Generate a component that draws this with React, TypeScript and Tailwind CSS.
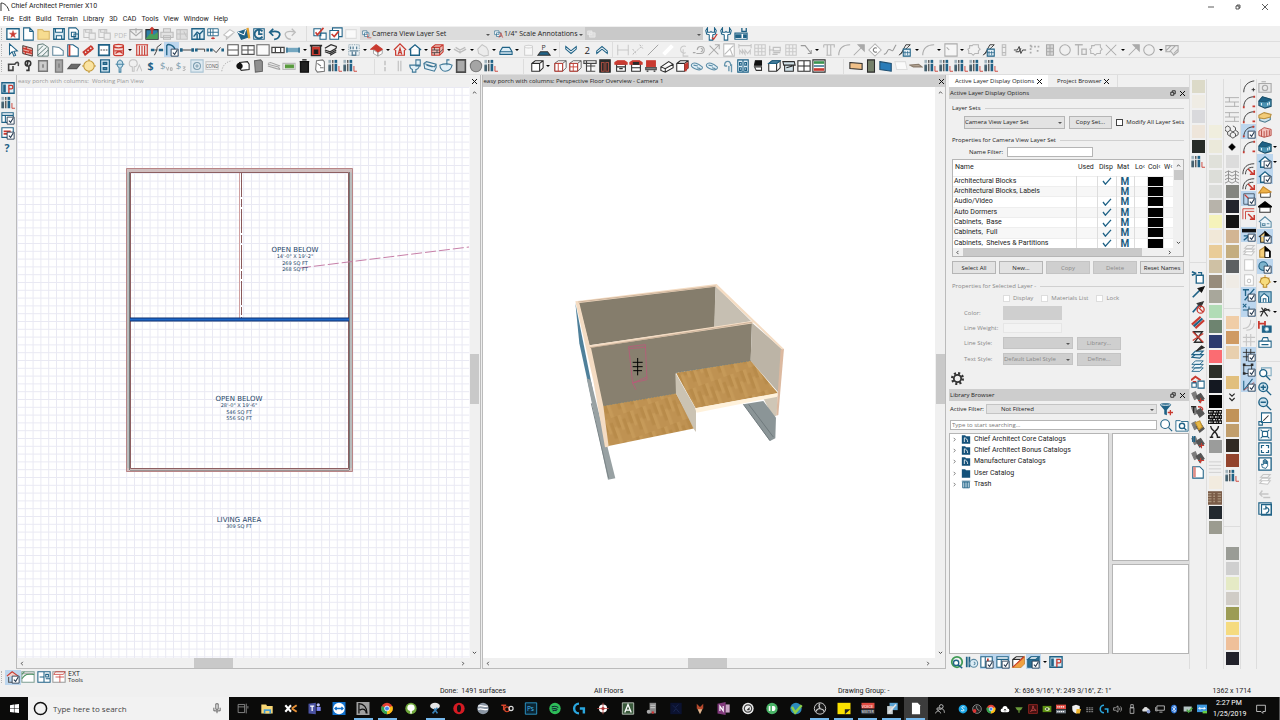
import { ReactNode } from "react";

const B = "#1f6286";
const R = "#c93a30";
const G = "#c2c2c2";
const K = "#2b2b2b";

const L = ({ d, c = B, f = "none", w = 1.2 }: { d: string; c?: string; f?: string; w?: number }) => (
  <path d={d} stroke={c} fill={f} strokeWidth={w} />
);

const housePath = "M1 8 8 2l7 6M3 7v7h10V7";
const cubePath = "M2 5 6 2h9v8l-4 4H2zM2 5h9v9M11 5l4-3";
const checkBox = (
  <>
    <L d="M7 7h8v8H7z" f="#fff" c="#24384f" w={1} />
    <L d="m9 11 2 2 3-5" c="#24384f" w={1.2} />
  </>
);
const catalogCards = (
  <>
    <L d="m1 4 4-2 3 7-4 2z" f="#7d7d7d" c="#7d7d7d" />
    <L d="m6 7 5-3 4 6-5 4z" f="#555" c="#555" />
  </>
);

// every toolbar glyph, drawn on a 16 unit square
const glyphs: Record<string, ReactNode> = {
  star: <><L d="M1 2h14v12H1z" f="#fff" w={1.5} /><L d="m8 4 1 3h3L9.5 9l1 3L8 10.2 5.500 12l1-3L4 7h3z" c={R} f={R} w={0.5} /></>,
  doc: <L d="M3 1h7l4 4v10H3zM10 1v4h4" f="#fff" />,
  folder: <L d="M1 3h5l2 2h6v9H1z" c="#d9b765" f="#f7dc90" />,
  save: <><L d="M2 2h12v12H2z" f="#dcecf5" w={1.5} /><L d="M4 2h8v4H4zM5 10h6v4H5z" f="#fff" /></>,
  saveas: <><L d="M2 1h8l3 3v10H2z" f="#fff" /><L d="M5 6h5v5H5zM8 8h5v5H8z" /></>,
  gsave: <><L d="M1 3h9v9H1zM3 3v3h5V3" c={G} /><L d="M7 7h7v7H7z" c={G} f="#eee" /></>,
  pdf: <text x="0" y="12" fontSize="8" fill="#bdbdbd">PDF</text>,
  gmail: <L d="M1 3h14v11H1zM1 4l7 6 7-6M8 1v6" c="#aaa" />,
  picture: <><L d="M1 3h14v11H1z" f="#2f7fa8" c={K} /><L d="m2 13 5-6 3 3 4-3v6z" f="#49a05a" c="#49a05a" /><L d="M8 8V1M6 3l2-2 2 2" c={R} w={2} /></>,
  printer: <L d="M4 6V2h8v4M1 6h14v6H1zM4 10h8v4H4z" c="#bbb" f="#e2e2e2" />,
  gcube: <L d="M2 3h12v11H2zM6 3v11M2 8h12M10 5l3 6" c={G} f="#dedede" />,
  chart: <><L d="M1 2h14v12H1z" f="#e0eef5" w={1.5} /><L d="m3 11 4-5 3 2 4-4M7 8v6M10 8v6" w={1.6} /></>,
  screen: <><L d="M2 2h12v8H2zM5 2v8M8 2v8M2 6h12" f="#fff" w={1} /><L d="M8 11v3M6 13h4" c={R} /></>,
  eraser: <L d="m2 9 7-6 5 3-7 6zM5 11v3l7-6" c={G} f="#fff" />,
  mail: <><L d="m1 6 9-3 4 8-9 3z" f={B} /><L d="m1 6 7 3 2-6" c="#fff" /><L d="m12 1 2 12" c="#e0a030" w={2.6} /></>,
  swirl: <><L d="M2 2h12v12H2z" /><L d="M12 5a5 5 0 1 0 0 6M8 4v4h4" w={2} /></>,
  undo: <L d="M6 2 2 6l4 4M2 6c9-3 13 1 11 4-1 3-4 4-6 4" w={2} />,
  redo: <L d="m10 2 4 4-4 4M14 6C5 3 1 7 3 10c1 3 4 4 6 4" c="#bcbcbc" w={1.5} />,
  checks: <><L d="M1 2h8v8H1zM8 7h7v7H8z" f="#fff" /><L d="m3 6 2 3 7-8" c={R} w={1.8} /></>,
  checkframe: <><L d="M1 4h10v10H1zM4 4V1h11v10h-4" f="#fff" /><L d="m3 8 3 3 5-6" c={R} w={1.8} /></>,
  blank: <L d="M2 3h12v10H2z" c="#ddd" f="#fafafa" />,
  wrench: <L d="M4 1 2 4l1 4 3 1v6h4V9l3-1 1-4-2-3v5H9l-1-1-1 1H4z" f="#fff" />,
  wrenchc: <><L d="M4 1 2 4l1 4 3 1v6h4V9l3-1 1-4-2-3v5H9l-1-1-1 1H4z" f="#fff" /><L d="m9 12 2 2 4-6" c={R} w={1.5} /></>,
  cabtool: <><L d="M1 7h14v7H1z" f="#fff" /><L d="M2 9h6v3H2zM11 9h3v3h-3z" f={B} /><L d="M9 1v4h5V1" w={1.5} /></>,
  cursor: <L d="m4 1 9 8-4 .5L11 14l-2 1-2-5-3 3z" f="#fff" />,
  brick: <><L d="m2 3 11 3v9L2 12z" c={K} f="#e9b3ac" w={1} /><L d="m2 6 11 3M2 9l11 3M6 4v3M10 8v3M5 10v3" c={R} w={1.5} /></>,
  hatch: <L d="m2 2 6-1 6 4v10H2zM2 9l6-6M2 14 12 5M7 15l7-7" c="#4b6a67" f="#eef3f3" w={1} />,
  shape: <L d="M2 4v10h12V9L9 5z" f="#fff" c="#5e859a" />,
  door: <><L d="M2 2v13h12V6L8 2z" f="#fff" /><L d="M4 2v13" c={R} w={2} /></>,
  rail: <L d="M2 11 12 3M4 14 14 6M3 10l2 4M6 8l2 4M9 6l2 4M12 4l2 3" c={R} w={2} />,
  dashsq: <><L d="M2 2h12v12H2z" w={2} f="#fff" /><path d="M4 8h9" stroke={K} strokeDasharray="2 1" /></>,
  barrel: <L d="M2 3c0-2 11-2 11 0v10c0 2-11 2-11 0zM2 4c2 2 9 2 11 0M3 9h9M4 12c3-3 6-3 8 0" c={R} f="#f7dcd8" w={1.5} />,
  fence: <L d="M1 2h14M1 14h14M2 2v12M5 3v11M8 3v11M11 3v11M14 2v12" c={R} w={1.3} />,
  zigzag: <><L d="M5 8h3V5l5-4M8 8l-3 6" c={K} w={1} /><L d="M1 8h4M10 8h5" w={2.6} /></>,
  curve: <><L d="M2 14V3c1-2 9-2 10 7" w={1.5} />{checkBox}</>,
  wall: <><L d="M2 8h12" c={K} w={1} /><L d="M0 8h3M13 8h3" w={4} /></>,
  wall2: <><L d="M2 7h9v3" c={K} w={1} /><L d="M0 8h3M13 8h3" w={3.5} /></>,
  wall3: <><L d="m3 7 4 4 5-6" c={K} w={1} /><L d="M0 8h3M13 8h3" w={3.5} /></>,
  winh: <L d="M2 2h12v12H2zM2 8h12" c="#555" f="#fff" />,
  win4: <L d="M1 3h14v10H1zM8 3v10M1 8h14" c="#555" f="#fff" />,
  square: <L d="M1 2h14v12H1z" c="#666" f="#fafafa" />,
  win3: <L d="M1 5h14v6H1zM5 5v6M11 5v6" c="#444" f="#fff" w={1.4} />,
  bwall: <><L d="M1 8h14" w={5} c="#74a7c0" /><L d="M1 5v6M15 5v6" w={1.5} /></>,
  fire: <><L d="M1 3h14M3 3v11h10V3" c={K} w={2} /><L d="M4 5h8v8H4z" c={R} f={R} /><L d="M6 8h4v4H6z" f="#1c1c1c" c="#1c1c1c" /></>,
  stairs: <L d="m1 6 7-4 6 2v2M1 10l6 2 7-4M1 8l6 2 7-4M7 14l7-4" c={K} w={1.4} />,
  building: <><path d="M2 2h12v12H2z" stroke="#6f8c9b" fill="#eef4f7" strokeDasharray="1 1" /><L d="M4 4v3M7 4v3M11 4v3M3 9h10M6 10v4h4v-4" w={1.5} c="#5d8298" /></>,
  redhouse: <><L d="m4 8 5 3v4l-5-3zM9 11l5-3v4l-5 3z" c="#888" f="#fff" w={0.8} /><L d="m1 7 6-5 7 5-5 3-4-3z" c={R} f={R} /></>,
  ahouse: <L d="m1 8 7-7 7 7M3 8v6h10V8M6 13l2-7 2 7M6.500 11h3" c={R} w={1.4} />,
  house: <L d={housePath} f="#fff" w={1.5} />,
  bcube: <><L d={cubePath} c={R} f="#e8b9b2" /><L d="M2 8h9M2 11h9l4-4M5 5v3M8 8v3M5 11v3" c={K} w={0.8} /></>,
  gslab: <L d="m1 7 7 4 7-4M8 12V9M3 5l5 3 6-3" c="#bcbcbc" w={1.4} />,
  ghouse: <L d="m2 7 5-5 5 3 2 4v5l-5 1-6-3z" c="#c5c5c5" f="#ececec" />,
  trap: <L d="M1 10 4 5h8l3 5v3H1zM1 10h14" f="#dcecf5" />,
  cyl: <L d="M3 4c0-2 9-2 9 0v10H3zM3 5c2 1 7 1 9 0" c="#d0d0d0" f="#f8f8f8" />,
  pslab: <><L d="m1 14 3-4h8l3 4z" f={B} c="#333" /><text x="5" y="8" fontSize="8" fill="#333">P</text></>,
  down: <L d="m2 4 6 5 6-5v3l-6 5-6-5z" f="#fff" />,
  up: <L d="m2 12 6-5 6 5V9L8 4 2 9z" f="#fff" />,
  two: <text x="5" y="12" fontSize="11" fill="#222">2</text>,
  dimh: <L d="M2 2v12M14 2v12M2 8h12" c={G} w={1} />,
  dots: <path d="M2 13 13 3M2 7l4 6M10 2l4 5" stroke="#aaa" strokeDasharray="2 1.500" />,
  line: <L d="M2 14 14 2" c="#9a9a9a" w={1} />,
  bar: <L d="M3 13 13 3" c="#fff" w={4.5} />,
  cl: <L d="M10 4a4 4 0 1 0 0 7M7 7v8h6" c="#c8c8c8" />,
  tape: <L d="M1 11h3M6 8a4 4 0 1 1 4 4H5M10 6a2 2 0 1 1 0 4" c="#a8a8a8" />,
  diaga: <L d="M2 14 14 2M3 3l10 10M9 2h5v5" c="#aaa" />,
  boxa: <L d="M2 1h12v14H2zM3 13 13 3M9 6l3 8" c="#bbb" f="#fff" />,
  dim1: <L d="M1 3h14M1 1v5M15 1v5M2 13V8l3 4V8l3 5V8l3 4 3-4v5" c="#c5c5c5" />,
  dim2: <L d="M2 2h12v12H2zM2 6h12M2 10h12M6 2v12M10 2v12" c="#c9c9c9" />,
  dim3: <L d="M2 3v11M6 5h8v4H6zM6 11h8M5 13h6M1 8h6" c="#c0c0c0" w={1.3} />,
  lead: <L d="M2 3h5l7 9M10 12h4V8" c="#999" />,
  text: <L d="M2 2h12v3M2 5V2M6 2v12M10 2v12M5 14h6" c="#b5b5b5" />,
  arc: <L d="M2 14C2 6 7 2 15 2" c="#aaa" />,
  arrow: <><L d="M2 14 12 4" c="#aaa" /><L d="M7 2h7v7z" f="#aaa" c="#aaa" /></>,
  cdia: <><L d="m8 1 7 7-7 7-7-7z" c="#b5b5b5" f="#fff" /><L d="M10 6a2.500 2.500 0 1 0 0 4" c="#777" /></>,
  spline: <L d="M1 13c5 0 3-8 8-5 3 3 3-2 6-6" c="#999" />,
  fn: <><L d="m1 14 10-9 3-3H9L3 13" c={K} w={1} /><L d="M6 7h8v8H6z" f="#e8f2f8" /><L d="M8 9v5M11 9v5M6 11h8" w={0.8} /></>,
  gbox: <L d="M1 1h14v14H1zM3 5l3 3" c="#aaa" f="#f6f6f6" />,
  cloud: <L d="M3 3h3l1-1h6v3l2 2-2 2v3H9l-2 2-2-2H2V9L1 7l2-1z" c="#b5b5b5" f="#f2f2f2" />,
  vbar: <L d="M6 2h4v12H6zM6 5h4M6 11h4" c="#bbb" />,
  brk: <L d="M1 8h4l2-4 2 8 2-4h4M3 10h4l2-4" c={K} w={1} />,
  pts: <path d="M3 2v12M3 4h10M10 9h4" stroke="#aaa" strokeWidth="2" strokeDasharray="2 2" />,
  gcab: <L d="M4 2h8v12H4zM4 6h8M4 10h8M8 2v12" c="#aaa" f="#d6d6d6" />,
  circle: <L d="M8 2a6 6 0 1 1 0 12A6 6 0 1 1 8 2z" c="#aaa" />,
  textbox: <L d="M1 2h9M5 2v12M9 7h5v6H9z" c="#b5b5b5" w={1.5} />,
  cross: <L d="M2 2l12 12M14 2 2 14" c="#aaa" />,
  gpatch: <L d="M1 3h14v7l-5 4-3-4H1zM1 9l6-6M5 10l7-7M10 12l5-5" c="#aaa" f="#ececec" />,
  faucet: <L d="M2 6h8c3-4 5-2 4 2M3 5v8h5V8" c="#444" w={1.8} />,
  key: <L d="M8 2c4 0 4 5 1 6v6M7 8C4 7 4 2 8 2zM9 13H6" c="#333" w={1.8} />,
  panel: <L d="M3 2h10v12H3zM8 6v4" c="#777" f="#ccc" w={1.6} />,
  switch: <L d="M4 1h8v14H4zM8 5v5" c="#7a7a7a" f="#a8a8a8" w={1.5} />,
  slab: <L d="m1 11 4-5h10l-4 5z" c="#555" f="#6a6a6a" />,
  sun: <><L d="M8 0v16M0 8h16" c="#c29838" /><L d="M8 2a6 6 0 1 1 0 12A6 6 0 1 1 8 2z" c="#c29838" f="#fae3a1" /></>,
  outlet: <><L d="M3 1h10v14H3z" f="#dcecf5" w={1.5} /><L d="M6 4h4v2H6zM6 10h4v2H6z" w={1.5} /></>,
  bulbs: <L d="M8 1a5 5 0 0 1 1 9v5H7v-5a5 5 0 0 1 1-9zM3 6h10" c="#4a86a5" f="#c6dfeb" />,
  gbulbs: <L d="M6 1a4 4 0 0 1 1 8v5H5V9a4 4 0 0 1 1-8zM10 14l3-7 3 7" c="#c4c4c4" />,
  dollar: <text x="4" y="12" fontSize="12" fontWeight="bold" fill={B}>$</text>,
  dollarv: <><text x="1" y="11" fontSize="11" fill="#7d9fb1">$</text><L d="m8 9 2 4 1-4M13 10h2v3h-2z" c="#999" w={0.8} /></>,
  dollar3: <><text x="2" y="11" fontSize="11" fill="#7d9fb1">$</text><L d="M10 9h3l-2 2c3 0 2 3-1 2" c="#999" w={0.8} /></>,
  dial: <><L d="M1 1h14v14H1z" c="#a9c3d3" f="#dfeaf1" /><L d="M8 4a4 4 0 1 1 0 8 4 4 0 1 1 0-8zM8 6v4M6 8h4" c="#7d9fb1" /></>,
  cond: <><L d="M1 3h14v9H1z" c="#ccc" /><text x="1" y="10" fontSize="5" fill="#555">COND</text></>,
  garc: <path d="M2 14C3 7 7 3 14 2" stroke="#aaa" fill="none" strokeDasharray="1.500 1.500" />,
  camera: <><L d="m4 4 9-1 2 3v6l-9 1-2-3z" c={K} f="#fff" /><L d="M4 5a3 3 0 1 1 0 6 3 3 0 0 1 0-6z" f="#111" c="#111" /></>,
  fridge: <L d="m4 2 7-1 2 2v11l-8 1z" c="#666" f="#909090" />,
  duct: <L d="m1 6 12 3 2 3M1 8l10 3 4 1M1 5l3-1 11 4" c="#a5a5a5" />,
  unit: <><L d="M1 5h14v7H1z" c="#bbb" f="#e6e6e6" /><L d="M4 7h9v3H4z" c="#569a3b" f="#569a3b" /></>,
  trash: <L d="M4 3h9v12H4zM3 3h11M6 1h5" c="#111" f="#222" w={1.5} />,
  clip: <L d="m4 2 7-1 2 2v11l-8 1-2-3zM5 5l4 3M8 10h4" c="#777" f="#fff" />,
  bars: <><L d="M2 1v13" c="#9fb2bc" w={3} /><L d="M2 7v7" c="#44606f" w={3} /><L d="M5.500 1v13" c="#222" w={1.2} /><L d="M9 1v13" w={3} /><L d="M0 5h11" c="#eee" w={1} /><L d="M12.500 8v6H16" c={R} w={1} /></>,
  gpole: <L d="M8 2v5M8 9v5" c="#bbb" w={1.5} />,
  gpoles: <L d="M6 2v12M9 2v12" c="#bbb" />,
  toilet: <L d="M9 1h5v7H9zM2 7h11c0 4-3 5-4 5v3H5v-3C3 11 2 9 2 7z" f="#e3f0f7" c="#3e7796" />,
  tub: <L d="m1 5 3-2 11 3v4l-2 4-11-3zM1 5l12 4 2-3M4 7l7 2" f="#e3f0f7" c="#3e7796" />,
  sink: <L d="M1 7c5-2 9-2 14 0-1 4-4 7-8 7-3 0-6-3-6-7zM9 7V1h3" f="#e3f0f7" c="#3e7796" />,
  mirror: <L d="M3 1h10v14H3z" c="#4c4c4c" f="#aaa" w={1.8} />,
  disc: <L d="M8 1.500a6.500 6.500 0 1 1 0 13 6.500 6.500 0 1 1 0-13z" c="#777" f="#a5a5a5" />,
  cab: <L d={cubePath} c={K} f="#fff" />,
  cab2: <><L d={cubePath} c="#555" f="#fff" w={1} /><L d="M2 5h9v9M2 5v9h9M6 5v9" c={R} w={1} /></>,
  cab3: <><L d={cubePath} c="#555" f="#fff" w={1} /><L d="M2 5h9v9H2zM6 5v9M2 9h9" c={R} w={1} /></>,
  cab4: <L d="M1 2h14v3H1zM4 2v12h10M4 8h10M9 5v9" c="#444" w={1.3} f="#fff" />,
  ddoor: <><L d="M2 1h12v14H2z" c={K} f={K} /><L d="M4 4h3v10H4zM9 4h3v10H9z" c="#a24b3f" /></>,
  redcab: <><L d="M3 6h10v8H3zM3 9h10M6 11h4" c={K} f="#fff" /><L d="M1 4 4 2h8l3 2v2H1z" c={R} f={R} /></>,
  redstove: <><L d="M3 6h10v8H3zM3 10h10" c={K} f="#fff" /><L d="M1 4 4 2h8l3 2v2H1z" c={R} f={R} /><L d="M5 4h6v2H5z" c={K} f={K} /></>,
  redchair: <><L d="M3 2h10v7H3z" c={R} f={R} /><L d="M2 10h12v2H2zM3 14h2M11 14h2" c="#555" w={1.5} /></>,
  box: <L d="m1 9 9-6 5 3v4l-9 5-5-2zM1 9l5 2 9-5M6 11v4" c={K} f="#fff" />,
  fridge2: <><L d={cubePath} c={K} f="#fff" /><L d="M12 5v9M14 4v7" c={R} w={2.5} /></>,
  rings: <L d="M2 6c2-3 7-1 12 3 1 3-3 4-6 3S0 9 2 6zM4 7l5 1M8 10l4 1" c="#5c8da7" f="#e3f0f7" />,
  faucet2: <L d="M4 8c0-7 8-7 7 0M4 8h3M9 8v6M12 6v9" c="#6594ac" w={1.5} />,
  window2: <L d="M2 1h12v14H2zM8 1v14M4 4h2v3H4zM10 4h2v3h-2zM4 10h2v3H4zM10 10h2v3h-2z" f="#dcecf5" />,
  stool: <><L d="M5 2h7v5H4z" c="#111" f="#111" /><L d="M4 9h8v4H6z" c="#333" f="#fff" /></>,
  bcab: <><L d={cubePath} c={K} f="#fff" /><L d="M2 5 6 2h9l-4 3z" f="#4f839e" /></>,
  corner: <L d="M1 3h13l1 4H2zM3 7v7h10V7M5 10l7-2" c={K} f="#d2e2ea" />,
  shelves: <L d="M1 2h14v12H1zM1 8h14M8 2v12" c={K} f="#fff" />,
  stripes: <><L d="M1 1h14v14H1z" c={K} f="#fff" /><L d="M2 4h12" c="#3c9350" w={3} /><L d="M2 8h12" c="#4f839e" w={2} /><L d="M2 12h12" c={R} w={3} /></>,
  mat1: <L d="m1 4 14 1v7L1 11z" c={K} f="#f0c089" />,
  mat2: <L d="M4 1h8v14H4z" c={K} f="#75806a" />,
  mat3: <L d="m1 3 13 2v9L1 12z" c="#1d4e70" f="#2a7cb8" />,
  mat4: <L d="M1 3h12l2 9H3z" c="#ddd" f="#fafafa" />,
  mat5: <L d="m1 7 10-1 4 3H5z" c="#897b6c" f="#b5a594" />,
  pbar: <><L d="M1 2h14v12H1z" f="#dcecf5" w={1.5} /><L d="M4 4v9" w={3} /><L d="M9 14V5h3c2 0 2 4 0 4H9" c={R} w={1.5} /></>,
  dcheck: <><L d="M1 2h13v11H1zM1 5h13M5 5v8" f="#fff" />{checkBox}</>,
  redcheck: <><L d="M1 2h13v11H1z" f="#fff" /><L d="M3 6h8M3 9h5" c={R} w={2} />{checkBox}</>,
  help: <text x="4" y="12" fontSize="12" fontWeight="bold" fill={B}>?</text>,
  roofred: <><L d="m1 7 6-5 7 5" c={R} f="#f3cfca" /><L d="M3 8v6h9V8" c="#555" />{checkBox}</>,
  terrain: <><L d="M1 2h14v12H1z" c="#7d9e93" f="#fff" /><L d="M2 4h12" c="#b5b5b5" w={2} /><L d="M1 10c5-7 8-5 14-5M1 5l3-3" c="#4b9363" /></>,
  plan: <L d="M1 2h14v12H1zM8 2v12M3 8h5M10 5h3v3h-3zM10 10h5" f="#fff" />,
  elev: <><L d="M1 2h14v12H1z" c="#999" f="#fff" /><L d="M2 5 4 2h11l-2 3zM4 8h10M9 6v8" c={R} w={0.9} /></>,
  arc1: <><L d="M2 14C2 6 7 2 14 1" c={K} w={1} /><L d="M11 11h4M13 9v4" c={K} w={1} /></>,
  arc2: <><L d="M2 14C2 6 7 2 14 2" c={K} w={1} /><L d="M13 2h2M1 14h2M12 13h3" c={R} w={2.2} /></>,
  arcc: <><L d="M2 14C2 6 7 2 14 2" c={K} w={1} /><L d="M1 13h2M12 2h2" c={R} w={2.2} />{checkBox}</>,
  offs: <><L d="M1 14C1 6 6 2 14 2M4 14c0-5 3-8 9-8" c={K} w={1} /><L d="m7 8 6 6M9 14h5V9" c={R} w={1.8} /></>,
  offs2: <><L d="M1 14V2h13M4 14V5h10" c={R} w={1} /><L d="m7 8 6 6M9 14h5V9" c={R} w={1.8} /></>,
  offc: <><L d="M2 2h12v12H2z" c="#456" w={1} /><L d="m3 3 9 9" c={R} w={1.5} />{checkBox}</>,
  snap: <><L d="M0 3h16" c="#111" w={4} /><L d="m2 14 6-5M2 9h6" w={1.5} />{checkBox}</>,
  glayers: <L d="m2 10 3-3h9l-3 3zM2 13l3-3h9l-3 4zM3 6l3-3h8l-3 3z" c="#c5c5c5" f="#fff" />,
  gpage: <L d="M3 2h10v12H3z" c="#c9c9c9" f="#fff" />,
  gpage2: <L d="M3 2h8l2 2v10H3zM8 7a2 2 0 1 1 0 4 2 2 0 1 1 0-4z" c="#c9c9c9" f="#fff" />,
  tcheck: <><L d="M1 2h7M4 2v7M3 14 14 1" w={1.5} />{checkBox}</>,
  xcheck: <><L d="M1 1l4 4M5 1 1 5M8 4v11M1 8h14" />{checkBox}</>,
  gsnap: <L d="M1 12c6 0 9-4 9-10M5 14c6 0 9-4 9-8" c="#c5c5c5" />,
  ggrid: <L d="M1 5h14M1 10h14M5 1v14M10 1v14" c="#c5c5c5" />,
  grid: <><L d="M1 5h14M1 10h14M5 1v14M10 1v14" c={K} w={1} />{checkBox}</>,
  snapbox: <><L d="M2 3h9v9H2z" c={K} w={1} /><L d="M1 2h3M10 2h3M1 12h3" c={K} w={3} />{checkBox}</>,
  angle: <><L d="M2 14 12 1M2 14V3" /><L d="M2 14 14 5" c={R} w={0.8} />{checkBox}</>,
  gcam: <L d="M1 4h14v10H1zM4 2h5M8 6a3 3 0 1 1 0 6 3 3 0 1 1 0-6z" c="#aaa" f="#e9e9e9" w={1.3} />,
  hblue: <><L d="m1 7 4-5 10 3v8l-7 2-7-3z" f="#4b93b3" c="#1a4d67" /><L d="m1 7 4-5 10 3-6 3z" f={B} c="#1a4d67" w={0.8} /><L d="M4 9v3M11 9v3M13 8v3" c="#e0f0f5" /></>,
  hyel: <><L d="M2 8v4l6 2 6-3V7" f="#cfe3ed" c="#4b7a8c" /><L d="m1 6 6-3 8 2-1 3-7 2-6-1z" f="#f3cc79" c="#b98f3e" /></>,
  hred: <L d="m1 7 6-4 8 2v7l-8 2-6-2zM4 6v7M7 7v7M10 6v7M13 6v6" f="#f3c3bd" c="#b4433a" w={1} />,
  hcheck: <><L d={housePath} f="#fff" w={1.5} />{checkBox}</>,
  hor: <><L d="M3 8h11v6H3z" f="#fff" c={K} w={1} /><L d="m1 9 5-7 9 6-5 1z" f="#efb248" c="#c88a2c" /></>,
  hblack: <><L d="M2 8h12v6H2z" c="#333" f="#fff" /><L d="m0 8 8-6 8 6z" c="#000" f="#000" /></>,
  hline: <L d="m1 8 7-6 7 6v6H3V8M5 10h3v2H5zM10 10h3" c="#5b8aa3" f="#edf5f9" />,
  hhalf: <><L d={housePath} f="#f5cf7c" c="#333" /><L d="M8 2v6h6z" f="#000" c="#000" />{checkBox}</>,
  hhalf2: <><L d="M2 6l6-4v12H2z" f="#f5cf7c" c="#b98f3e" /><L d="M8 2l6 5v7H8z" f="#000" c="#000" /><L d="M9 8h3v5H9z" f="#fff" c="#fff" /></>,
  globe: <><L d="M6 2a5 5 0 1 1 0 10A5 5 0 1 1 6 2z" f="#7db3cd" />{checkBox}</>,
  bulb: <><L d="M8 0v3M1 8h3M12 8h3M3 3l2 2M13 3l-2 2" c="#d4a23b" /><L d="M8 3a4 4 0 0 1 2 8v3H6v-3a4 4 0 0 1 2-8z" f="#f7dc7d" c="#b98a2c" /></>,
  hpage: <><L d="M1 2h14v12H1z" f="#9cc6da" /><L d="M3 14V8l4-4 5 4v6M6 14v-4h3v4" f="#fff" /></>,
  net: <L d="m3 13 5-9 6 3M4 3l7 10M2 8l11-3" c={K} w={1.3} />,
  savecam: <><L d="M1 1v9M8 1v9M1 4h7" c={R} w={2} /><L d="M5 7h10v7H5z" f={B} /><L d="M10 8.500a2 2 0 1 1 0 4 2 2 0 1 1 0-4z" f="#fff" c="#9cc6da" /></>,
  bprint: <L d="M4 7 6 3h5l1 4M1 7h14v7H1zM4 11h8" f="#fff" />,
  zoomr: <><L d="M4 1h11v9H4z" c="#7aa8bf" /><L d="M6 3a4 4 0 1 1 0 8 4 4 0 1 1 0-8zM9 10l5 5" f="#fff" w={1.6} /></>,
  zoomin: <L d="M6 1a5 5 0 1 1 0 10A5 5 0 1 1 6 1zM3 6h6M6 3v6M10 10l5 5" f="#cfe3ed" w={1.6} />,
  zoomout: <L d="M6 1a5 5 0 1 1 0 10A5 5 0 1 1 6 1zM3 6h6M10 10l5 5" f="#cfe3ed" w={1.6} />,
  zoomf: <><L d="M4 1h11v11H4zM1 11h4v4H1z" f="#fff" /><L d="M6 10 12 4" c={K} /></>,
  fit: <L d="M1 1h14v14H1zM5 5h6v6H5zM3 3l3 3M13 3l-3 3M3 13l3-3M13 13l-3-3" f="#fff" />,
  fill: <L d="M1 1h14v14H1zM4 7V4h3M9 4h3v3M12 9v3H9M7 12H4V9" f="#fff" w={1.4} />,
  hand: <><L d="M1 1h14v14H1z" f="#fff" w={1.5} /><L d="M5 12 4 8l2 1V4h1v4V3h2v5-4h1v4-3h1v5l-2 3z" w={1} /></>,
  gundo: <L d="m5 4-3 4 3 3M2 8h10M6 12h8" c="#c5c5c5" w={1.5} />,
  refresh: <><L d="M1 1h14v13H1zM4 3h12v12H4z" f="#fff" w={1.4} /><L d="M9 6c5 1 4 6 0 7M9 4v4H6" w={1.4} /></>,
  spray: <><L d="M6 6h8v9H6zM8 3h4v3" f="#fff" w={1.5} /><L d="m1 2 5 2M1 6l5-2" w={2} /></>,
  dropper: <><L d="m2 14 8-8" c={B} w={2} /><L d="m8 4 4 4 3-6z" f="#111" c="#111" /></>,
  dropno: <><L d="m2 14 7-8" w={2} /><L d="m7 4 4 4 3-6z" f="#333" c="#333" /><L d="M11 7a4 4 0 1 1 0 8 4 4 0 1 1 0-8zM8 8l6 6" c={R} w={1.5} /></>,
  lines: <><L d="M1 11 11 2M5 15 15 6" c={R} w={2.5} /><L d="M3 13 13 4" w={2.5} /></>,
  glassno: <><L d="M3 2h10L4 14h9z" c={K} w={1.5} /><L d="m2 2 12 12M2 12 14 4" c={R} w={1.5} /></>,
  ldrop: <><L d="m1 11 4-4h9l-4 4zM1 14l4-3h9l-4 4z" f="#dcecf5" /><L d="m6 7 6-6 3 2z" f={K} c={K} /></>,
  layers: <L d="m1 5 4-4h9l-4 4zM1 9l4-4h9l-4 4zM1 13l4-4h9l-4 4z" f="#eef6fa" w={1} />,
  hspray: <><L d="m0 6 5-4 6 4M2 8h4" c={R} w={2.2} /><L d="M8 7h7v8H8zM1 9h5v5H1z" f="#fff" /></>,
  cards: <>{catalogCards}<L d="M11 9v6M8 12h7" c={R} /></>,
  cards2: <>{catalogCards}<L d="M0 2h6M3 2v7" c={K} w={1.5} /><L d="M8 2c5 0 6 2 5 4" c={R} w={1.5} /></>,
  cards3: <>{catalogCards}<L d="m5 3 5-2 3 7-4 3z" f="#e8b947" c="#c2922e" /></>,
  cards4: <>{catalogCards}<L d="M2 1v7M4 1v7" w={1.5} /><L d="M12 9v6M9 12h6" c={R} /></>,
  rdoor: <><L d="M2 2h8l4 4v9H2z" f="#fff" /><L d="M4 2v12" c="#e08d86" w={3} /></>,
  brickl: <L d="M0 3h16M0 8h16M0 13h16M5 3v5M11 8v5" c="#aaa" w={1} />,
  hex: <L d="m3 1 3 2v3L3 8 0 6V3zM9 1l3 2v3L9 8 6 6M6 10l3-2 3 2v3l-3 2-3-2zM12 6l3 2v3l-3 2M3 8v3l3 2" c="#444" w={1} />,
  diamond: <L d="m8 4 4 4-4 4-4-4z" f="#000" c="#000" w={0.5} />,
  zig: <L d="m0 3 4-2 4 2 4-2 4 2M0 7l4-2 4 2 4-2 4 2M0 11l4-2 4 2 4-2 4 2M0 15l4-2 4 2 4-2 4 2M4 1v12M12 1v12" c="#888" w={1} />,
  noise: <><L d="M0 0h16v16H0z" f="#111" c="#111" /><path d="M1 2h14M0 5h16M2 8h13M0 11h16M1 14h14" stroke="#ddd" strokeWidth="1.500" strokeDasharray="2 1 1 2" /></>,
  rune: <L d="M3 1c0 6 8 6 8 13M12 1C12 7 4 8 4 14M2 14h4M10 14h4" c="#222" w={1.5} />,
  hlines: <L d="M1 1h14M1 5h14M1 9h14M1 13h14" c="#ccc" w={1} />,
  bricks: <><L d="M0 1h16v14H0z" f="#7a5c48" c="#7a5c48" /><path d="M0 3h16M0 6h16M0 9h16M0 12h16" stroke="#a8917a" strokeWidth="1.500" strokeDasharray="4 2 2 3" /></>,
  chevs: <L d="m5 3 3 3 3-3M5 8l3 3 3-3" c="#222" w={1.3} />,
  search2: <><L d="M8 2a6 6 0 1 1 0 12A6 6 0 1 1 8 2z" c="#3f9a55" w={2} /><L d="M7 6a3 3 0 1 1 0 6 3 3 0 1 1 0-6zM9 11l5 4" f="#fff" w={1.5} /></>,
  libs: <><L d="M2 2v12M5 2v12" w={2} /><L d="M10 5a4 4 0 1 1 0 9 4 4 0 1 1 0-9zM10 8a1 1 0 1 1 0 3" c="#5b8aa3" f="#dcecf5" /></>,
  pane1: <><L d="M1 2h13v12H1zM6 2v12" f="#fff" /><L d="M9 4v6" c={R} w={2} />{checkBox}</>,
  pane2: <><L d="M1 2h13v12H1zM1 5h13M6 5v9" f="#fff" />{checkBox}</>,
  half3d: <><L d={cubePath} c={K} f="#fff" /><L d="M2 14 15 2v8l-4 4z" f="#f0a040" c="#f0a040" /><L d="M2 14 15 2" c={R} /></>,
  b3d: <><L d={cubePath} f="#2c6d92" /><L d="M2 5 6 2h9l-4 3z" f="#fff" />{checkBox}</>,
};

const Glyph = ({ name }: { name: string }) => (
  <svg viewBox="0 0 16 16" fill="none" className="h-[14px] w-[14px] shrink-0" aria-hidden="true">
    {glyphs[name]}
  </svg>
);

// "*" in front of a name means the tool is switched on, "v" is a drop-down arrow
const Tools = ({ items, className = "" }: { items: string; className?: string }) => (
  <div className={`flex h-[15px] shrink-0 items-center ${className}`}>
    {items.split(" ").map((item, i) => {
      if (item === "v") {
        return (
          <button key={i} aria-label="more tools" className="flex h-[15px] w-0 flex-1 items-center justify-center">
            <span className="h-0 w-0 border-x-2 border-t-2 border-x-transparent border-t-black" />
          </button>
        );
      }
      const on = item.startsWith("*");
      const name = on ? item.slice(1) : item;
      return (
        <button key={i} aria-label={name} className={`flex h-[15px] w-0 flex-[2] items-center justify-center ${on ? "bg-[#bcd6ee]" : ""}`}>
          <Glyph name={name} />
        </button>
      );
    })}
  </div>
);

// vertical strip of 15px cells: a colour gives a swatch, "_" an empty cell
const Strip = ({ items }: { items: string }) => (
  <div className="flex flex-col">
    {items.split(" ").map((item, i) => {
      if (item === "_") return <div key={i} className="h-[15px]" />;
      if (item.startsWith("#")) {
        return (
          <button key={i} aria-label={`material ${item}`} className="flex h-[15px] items-center justify-center">
            <span className="h-[13px] w-[13px]" style={{ backgroundColor: item }} />
          </button>
        );
      }
      const arrow = item.endsWith("+");
      const on = item.startsWith("*");
      const name = item.replace("*", "").replace("+", "");
      return (
        <button key={i} aria-label={name} className="flex h-[15px] items-center">
          <span className={`flex h-[15px] w-[16px] items-center justify-center ${on ? "bg-[#bcd6ee]" : ""}`}>
            <Glyph name={name} />
          </span>
          {arrow && <span className="h-0 w-0 border-x-2 border-t-2 border-x-transparent border-t-black" />}
        </button>
      );
    })}
  </div>
);

const Handle = () => <div className="mr-[3px] h-3 w-px border-l border-dotted border-[#b5b5b5]" />;

const VScroll = () => (
  <div className="flex w-[10px] shrink-0 flex-col items-center bg-[#f0f0f0] py-1">
    <svg viewBox="0 0 6 4" className="w-[5px]"><path d="m1 3 2-2 2 2" stroke="#333" fill="none" /></svg>
    <div className="flex-[21]" />
    <div className="h-[50px] w-[9px] bg-[#c9c9c9]" />
    <div className="flex-[20]" />
    <svg viewBox="0 0 6 4" className="w-[5px]"><path d="m1 1 2 2 2-2" stroke="#333" fill="none" /></svg>
  </div>
);

const HScroll = ({ before, after }: { before: string; after: string }) => (
  <div className="flex h-[11px] shrink-0 items-center border-b border-[#bbb] bg-[#f0f0f0] pl-[3px] pr-[15px]">
    <svg viewBox="0 0 4 6" className="h-[5px] w-1"><path d="M3 1 1 3l2 2" stroke="#333" fill="none" /></svg>
    <div className={before} />
    <div className="h-[10px] w-[39px] bg-[#c9c9c9]" />
    <div className={after} />
    <svg viewBox="0 0 4 6" className="h-[5px] w-1"><path d="m1 1 2 2-2 2" stroke="#333" fill="none" /></svg>
  </div>
);

const Cross = () => (
  <svg viewBox="0 0 6 6" className="h-[5px] w-[5px]"><path d="m0 0 6 6M6 0 0 6" stroke="#111" strokeWidth="1.200" /></svg>
);

const Select = ({ value, label, className = "" }: { value: string; label: string; className?: string }) => (
  <div className={`relative flex ${className}`}>
    <select aria-label={label} className="w-full appearance-none bg-transparent leading-none outline-none">
      <option>{value}</option>
    </select>
    <span className="pointer-events-none absolute right-[2px] top-1/2 border-x-2 border-t-2 border-x-transparent border-t-[#555]" />
  </div>
);

const PlanView = () => (
  <svg className="h-full min-w-0 flex-1 bg-white" fontFamily="DejaVu Sans" fill="#1d4468" textAnchor="middle">
    <defs>
      <pattern id="grid" width="7.800" height="7.800" patternUnits="userSpaceOnUse">
        <path d="M.5 0v8M0 .5h8" stroke="#e9e9f3" fill="none" />
      </pattern>
    </defs>
    <rect width="100%" height="100%" fill="url(#grid)" />
    <g fill="none">
      <path d="M111.500 81v304M333.500 81v304" stroke="#b9bdbd" strokeWidth="4" />
      <path d="M109 83.500h226M109 383h226" stroke="#d0bfbf" strokeWidth="4" />
      <path d="M109.500 81.500h226v303h-226z" stroke="#b98586" />
      <path d="M113.500 85.500h218v296h-218z" stroke="#8d5f61" />
      <path d="M112.500 85v298M332.500 85v298" stroke="#666" strokeWidth="0.800" />
      <path d="M113 383.500h219" stroke="#777" strokeWidth="0.600" />
      <path d="M222.500 86v145" stroke="#cfa0a0" />
      <path d="M224.500 86v145" stroke="#8a5a5a" strokeDasharray="24 2 8 2" />
      <path d="M113 232.500h219" stroke="#10336f" strokeWidth="4" />
      <path d="M113 232.500h219" stroke="#1c67c9" strokeWidth="2" />
      <path d="m283 181 169-21" stroke="#c77fa8" strokeDasharray="11 3" />
    </g>
    <g fontSize="7">
      <text x="278" y="165">OPEN BELOW</text>
      <text x="222" y="314">OPEN BELOW</text>
      <text x="222" y="435">LIVING AREA</text>
    </g>
    <g fontSize="5">
      <text x="278" y="171">14'-0" X 19'-2"</text>
      <text x="278" y="178">269 SQ FT</text>
      <text x="278" y="184">268 SQ FT</text>
      <text x="222" y="320">28'-0" X 19'-6"</text>
      <text x="222" y="327">546 SQ FT</text>
      <text x="222" y="333">556 SQ FT</text>
      <text x="222" y="441">309 SQ FT</text>
    </g>
  </svg>
);

const CameraView = () => (
  <svg className="h-full min-w-0 flex-1 bg-white">
    <defs>
      <pattern id="wood" width="40" height="80" patternUnits="userSpaceOnUse" patternTransform="rotate(-20)">
        <path d="M0 0h40v80H0z" fill="#bf9252" />
        <path d="M0 0h10v46H0zM20 30h10v50H20z" fill="#c69a59" />
        <path d="M10 14h10v50H10zM30 0h10v36H30z" fill="#b88b4a" />
      </pattern>
    </defs>
    <g transform="translate(67 183) scale(.3333)">
      <path d="m76 98 12 60 60 300 12 70-18-60L88 220z" fill="#4f809a" />
      <path d="m110 325 12 5 74 295-22 4z" fill="#98a1a3" />
      <path d="m124 400 52 225" stroke="#7a8588" strokeWidth="3" fill="none" />
      <path d="m85 96 412-48-3 124-376 54z" fill="#857d6c" />
      <path d="m497 48 107 106-112 18z" fill="#c6bfb2" />
      <path d="m120 232 486-76-4 119-224 33v64l-223 38z" fill="#88806f" />
      <path d="m606 158 91 80-11 130-84-95z" fill="#bcb4a6" />
      <path d="m640 385 43-8-3 58-10 10z" fill="#cfc6b6" />
      <path d="m580 403 60-10 38 50-2 62-16 8z" fill="#8b9597" />
      <path d="m580 403 80 109M596 403l74 98" stroke="#6f797c" strokeWidth="3" fill="none" />
      <path d="m155 408 223-38 57 105-270 55z" fill="url(#wood)" />
      <path d="m378 308 224-36 82 98-247 45z" fill="url(#wood)" />
      <path d="m376 308 62 110v68l-6-8-54-108z" fill="#cbc3b3" />
      <path d="m435 415 248-46v11l-243 48z" fill="#fff2dc" />
      <path d="m155 408 223-38M378 308l224-36" stroke="#6f7f80" strokeWidth="2" strokeDasharray="6 3" fill="none" />
      <path d="m76 94 424-52 202 195-5 3-200-190L88 99l31 127 487-73 5 7-488 73 37 175 16 122-11 2-35-200z" fill="#f4dcc3" />
      <path d="m692 240 10-4-17 199-6 2z" fill="#dcb9a0" />
      <path d="m85 96 412-48M120 233l486-76" stroke="#b99f87" strokeWidth="2" fill="none" />
      <path d="m236 230 50-6 5 105-43 10zM236 236l50-4M248 339l43-18M248 339l10 20" fill="none" stroke="#c4527c" strokeWidth="2" />
      <path d="M263 264v52M248 277h30M248 290h30M250 302h26" stroke="#000" strokeWidth="3" fill="none" />
    </g>
  </svg>
);

const layers = [
  { name: "Architectural Blocks", shown: true },
  { name: "Architectural Blocks, Labels", shown: false },
  { name: "Audio/Video", shown: true },
  { name: "Auto Dormers", shown: true },
  { name: "Cabinets,  Base", shown: true },
  { name: "Cabinets,  Full", shown: true },
  { name: "Cabinets,  Shelves & Partitions", shown: true },
];

const catalogs = [
  { name: "Chief Architect Core Catalogs", kind: "core" },
  { name: "Chief Architect Bonus Catalogs", kind: "core" },
  { name: "Manufacturer Catalogs", kind: "core" },
  { name: "User Catalog", kind: "user" },
  { name: "Trash", kind: "trash" },
];

const GroupTitle = ({ children, muted = false }: { children: ReactNode; muted?: boolean }) => (
  <div className={`flex h-3 items-center gap-1 ${muted ? "text-[#888]" : ""}`}>
    {children}
    <div className="h-px flex-1 bg-[#d0d0d0]" />
  </div>
);

const PanelTitle = ({ children }: { children: ReactNode }) => (
  <div className="flex h-3 shrink-0 items-center justify-between bg-[#cdcdcd] px-px pr-1">
    <span>{children}</span>
    <span className="flex items-center gap-1">
      <svg viewBox="0 0 8 8" className="h-[6px] w-[6px]"><path d="M1 3h4v4H1zM3 3V1h4v4H5" stroke="#222" fill="none" strokeWidth="1.200" /></svg>
      <Cross />
    </span>
  </div>
);

const PushButton = ({ children, disabled = false }: { children: ReactNode; disabled?: boolean }) => (
  <button
    disabled={disabled}
    className={`h-[13px] w-11 whitespace-nowrap border ${disabled ? "border-[#c4c4c4] bg-[#cfcfcf] text-[#8a8a8a]" : "border-[#b5b5b5] bg-[#e3e3e3]"}`}
  >
    {children}
  </button>
);

const LayerOptions = () => (
  <div className="flex flex-col pl-[3px] pr-[5px] pt-[3px]">
    <GroupTitle>Layer Sets</GroupTitle>
    <div className="flex h-4 items-center gap-1 pl-3">
      <Select label="Layer set" value="Camera View Layer Set" className="h-[13px] w-[101px] border border-[#b5b5b5] bg-[#e3e3e3]" />
      <PushButton>Copy Set...</PushButton>
      <label className="flex items-center gap-[3px] whitespace-nowrap">
        <input type="checkbox" className="h-[7px] w-[7px] appearance-none border border-[#444] bg-white" />
        Modify All Layer Sets
      </label>
    </div>
    <div className="h-1" />
    <GroupTitle>Properties for Camera View Layer Set</GroupTitle>
    <label className="flex h-3 items-center gap-1 pl-[17px]">
      Name Filter:
      <input className="h-[10px] w-[86px] border border-[#b5b5b5] bg-white" />
    </label>
    <div className="mt-px border border-[#b5b5b5] bg-white">
      <div className="flex h-[88px]">
        <table className="h-full min-w-0 flex-1 table-fixed border-collapse text-left font-['Roboto',sans-serif] text-[7px]">
          <thead>
            <tr className="h-[16px]">
              <th className="p-0 pl-[2px] font-normal">Name</th>
              <th className="w-[21px] p-0 pl-[2px] font-normal">Used</th>
              <th className="w-[19px] p-0 pl-[2px] font-normal">Disp</th>
              <th className="w-[18px] p-0 pl-px font-normal">Mat</th>
              <th className="w-[13px] p-0 pl-px font-normal">Lo‹</th>
              <th className="w-[16px] p-0 pl-px font-normal">Col‹</th>
              <th className="w-[10px] p-0 pl-px font-normal">W‹</th>
            </tr>
          </thead>
          <tbody>
            {layers.map((layer, i) => (
              <tr key={layer.name} className={`border-t border-[#eee] ${i % 2 ? "bg-[#f7f7f7]" : ""}`}>
                <td className="whitespace-pre border-r border-[#ddd] p-0 pl-px leading-[9px]">{layer.name}</td>
                <td className="border-r border-[#ddd] p-0" />
                <td className="border-r border-[#ddd] p-0">
                  {layer.shown && (
                    <svg viewBox="0 0 12 10" className="mx-auto h-2 w-[10px]"><path d="m1 5 3 4 7-8" stroke={B} strokeWidth="1.600" fill="none" /></svg>
                  )}
                </td>
                <td className="border-r border-[#ddd] p-0 text-center text-[10px] leading-[9px] text-[#1c5c7e]">
                  <span className="block h-[9px] font-bold">M</span>
                </td>
                <td className="border-r border-[#ddd] p-0" />
                <td className="border-r border-[#ddd] p-0"><div className="h-[9px] bg-black" /></td>
                <td className="p-0" />
              </tr>
            ))}
          </tbody>
        </table>
        <div className="flex w-[10px] flex-col items-center bg-[#f0f0f0] pt-1">
          <svg viewBox="0 0 6 4" className="w-[5px]"><path d="m1 3 2-2 2 2" stroke="#333" fill="none" /></svg>
          <div className="mt-[3px] h-[10px] w-[9px] bg-[#c9c9c9]" />
          <svg viewBox="0 0 6 4" className="mb-1 mt-auto w-[5px]"><path d="m1 1 2 2 2-2" stroke="#333" fill="none" /></svg>
        </div>
      </div>
      <div className="flex h-2 items-center bg-[#f0f0f0] pl-[3px] pr-3">
        <svg viewBox="0 0 4 6" className="h-[5px]"><path d="M3 1 1 3l2 2" stroke="#333" fill="none" /></svg>
        <div className="ml-1 h-2 w-[179px] bg-[#c9c9c9]" />
        <svg viewBox="0 0 4 6" className="ml-auto h-[5px]"><path d="m1 1 2 2-2 2" stroke="#333" fill="none" /></svg>
      </div>
    </div>
    <div className="mt-1 flex justify-between">
      <PushButton>Select All</PushButton>
      <PushButton>New...</PushButton>
      <PushButton disabled>Copy</PushButton>
      <PushButton disabled>Delete</PushButton>
      <PushButton>Reset Names</PushButton>
    </div>
    <div className="h-[6px]" />
    <GroupTitle muted>Properties for Selected Layer -</GroupTitle>
    <div className="flex h-3 items-center gap-2 pl-[51px] text-[#888]">
      {["Display", "Materials List", "Lock"].map((label) => (
        <label key={label} className="flex items-center gap-[3px]">
          <input type="checkbox" disabled className="h-[7px] w-[7px] appearance-none border border-[#ddd] bg-white" />
          {label}
        </label>
      ))}
    </div>
    <div className="mt-px grid grid-cols-[39px_66px_44px] items-center gap-x-1 pl-3 text-[#888]">
      <span className="leading-4">Color:</span>
      <button disabled aria-label="Color" className="col-span-2 -ml-1 h-[14px] w-[59px] bg-[#cfcfcf]" />
      <label htmlFor="weight" className="whitespace-nowrap leading-[14px]">Line Weight:</label>
      <input id="weight" disabled className="col-span-2 -ml-1 h-[10px] w-[59px] border border-[#e6e6e6] bg-[#f3f3f3]" />
      <span className="leading-4">Line Style:</span>
      <Select label="Line style" value=" " className="-ml-1 h-3 border border-[#c4c4c4] bg-[#cfcfcf]" />
      <PushButton disabled>Library...</PushButton>
      <span className="leading-4">Text Style:</span>
      <Select label="Text style" value="Default Label Style" className="-ml-1 h-3 border border-[#c4c4c4] bg-[#cfcfcf]" />
      <PushButton disabled>Define...</PushButton>
    </div>
    <button aria-label="Settings" className="-ml-px mb-[3px] mt-1 h-[15px] w-[14px] self-start">
      <svg viewBox="0 0 16 16" className="h-[13px] w-[13px]">
        <circle cx="8" cy="8" r="6.500" fill="none" stroke="#333" strokeWidth="3" strokeDasharray="2.500 2.600" />
        <circle cx="8" cy="8" r="4.500" fill="none" stroke="#333" strokeWidth="2.200" />
      </svg>
    </button>
  </div>
);

const LibraryBrowser = () => (
  <>
    <PanelTitle>Library Browser</PanelTitle>
    <div className="flex h-4 items-center gap-[2px] pl-px">
      <span className="whitespace-nowrap">Active Filter:</span>
      <Select label="Active filter" value="Not Filtered" className="h-[10px] flex-1 border border-[#c4c4c4] bg-[#e3e3e3] pl-[14px]" />
      <button aria-label="Edit filter" className="mr-4">
        <svg viewBox="0 0 16 16" className="h-[14px] w-[14px]"><path d="M1 3c0-2 13-2 13 0L9 9v6l-3-1V9z" fill={B} /><path d="M2 3c2 1 9 1 11 0" stroke="#fff" fill="none" /><path d="M13 9v6M10 12h6" stroke={R} strokeWidth="1.500" /></svg>
      </button>
    </div>
    <div className="flex h-4 items-center gap-[2px] pl-px">
      <input aria-label="Search library" placeholder="Type to start searching..." className="h-[10px] min-w-0 flex-1 border border-[#b5b5b5] bg-white px-px placeholder:text-[#777]" />
      <button aria-label="Search">
        <svg viewBox="0 0 16 16" className="h-[14px] w-[14px]"><path d="M7 2a5 5 0 1 1 0 10A5 5 0 1 1 7 2zM11 11l4 4" stroke={B} fill="#fff" strokeWidth="1.300" /></svg>
      </button>
      <button aria-label="Search in folder">
        <svg viewBox="0 0 16 16" className="h-[14px] w-[14px]"><path d="M1 3h5l1 1h8v11H1z" stroke={B} fill="#fff" /><path d="M8 6a3 3 0 1 1 0 6 3 3 0 1 1 0-6zM10 11l3 3" stroke={B} fill="none" strokeWidth="1.500" /></svg>
      </button>
    </div>
    <div className="flex min-h-0 flex-1 gap-[3px] bg-[#dedede]">
      <div className="w-40 border border-[#b5b5b5] bg-white font-['Roboto',sans-serif] text-[7px]">
        <ul className="grid h-14 auto-rows-fr">
          {catalogs.map((c) => (
            <li key={c.name} className="flex items-center gap-[3px] pl-[2px]">
              <svg viewBox="0 0 4 6" className="h-[5px] w-[5px]"><path d="m1 1 2 2-2 2" stroke="#444" fill="none" strokeWidth=".8" /></svg>
              <svg viewBox="0 0 12 10" className="ml-px h-[9px] w-[10px]">
                {c.kind === "trash" ? (
                  <path d="M1 1h10M2 2h8v7H2zM4 2v7M6 2v7M8 2v7" stroke={B} fill="#cfe3ed" />
                ) : (
                  <path d="M1 0h4l1 1h5v9H1z" fill="#14517a" />
                )}
                {c.kind === "core" && <path d="M4 8V3c2 0 4 2 4 5" stroke="#fff" fill="none" />}
              </svg>
              {c.name}
            </li>
          ))}
        </ul>
      </div>
      <div className="flex flex-1 flex-col gap-[3px]">
        <div className="flex-[13] border border-[#b5b5b5] bg-white" />
        <div className="flex-[9] border border-[#b5b5b5] bg-white" />
      </div>
    </div>
    <Tools items="search2 libs *pane1 *pane2 half3d *b3d v pbar" className="w-[115px]" />
  </>
);

const Circle = ({ c }: { c: string }) => <circle cx="8" cy="8" r="7" fill={c} />;

const apps: { name: string; open?: boolean; art: ReactNode }[] = [
  { name: "Task view", art: <path d="M2 3h8v10H2zM2 6h8M12 2v12M14 5v3" stroke="#999" fill="none" /> },
  { name: "Explorer", art: <><path d="M1 3h6l1 2h7v9H1z" fill="#f8d775" /><path d="M4 9h9v5H4z" fill="#3d9bd8" /><path d="M6 11h5v3H6z" fill="#f8d775" /></> },
  { name: "XK", art: <><path d="m1 4 7 8M8 4l-7 8" stroke="#fff" strokeWidth="2.500" /><path d="m9 8 6-4M9 8l6 4" stroke="#e69138" strokeWidth="2.500" /></> },
  { name: "Teams", art: <><path d="M0 2l9-1v14l-9-1z" fill="#4b53a3" /><path d="M2 5h5M4.500 5v6" stroke="#fff" strokeWidth="1.500" /><path d="M10 6h5v5h-5z" fill="#7b83eb" /><circle cx="12" cy="3.500" r="2" fill="#b8bcf4" /></> },
  { name: "TeamViewer", art: <><path d="M0 0h16v16H0z" fill="#1172ce" /><Circle c="#fff" /><path d="M3 8h10M5 6 3 8l2 2M11 6l2 2-2 2" stroke="#1172ce" strokeWidth="1.600" fill="none" /></> },
  { name: "Chief Architect", open: true, art: <><path d="M0 0h16v16H0z" fill="#a0a0a0" /><path d="M3 14V2c6 0 10 5 10 12M4 10c5-3 8 0 8 4" stroke="#111" fill="none" strokeWidth="1.500" /></> },
  { name: "Chrome", open: true, art: <><Circle c="#e34133" /><path d="M1.500 5 8 8v7A7 7 0 0 1 1.500 5z" fill="#32a350" /><path d="M8 8l6.500-3A7 7 0 0 1 8 15z" fill="#fbc116" /><circle cx="8" cy="8" r="3" fill="#4a87ee" stroke="#fff" /></> },
  { name: "Android", art: <><Circle c="#6fa83b" /><path d="M8 3a4 4 0 0 1 1 8v3H7v-3a4 4 0 0 1 1-8z" fill="#fff" /></> },
  { name: "Snipping tool", open: true, art: <><ellipse cx="8" cy="5" rx="6" ry="4" fill="#e5e5e5" /><path d="m5 14 6-7M11 14 7 8" stroke="#3a80b5" strokeWidth="2" /></> },
  { name: "Opera", art: <><Circle c="#d51b23" /><ellipse cx="8" cy="8" rx="2.500" ry="4.500" fill="#111" /></> },
  { name: "Earth", art: <><Circle c="#8b96a3" /><path d="M2 5c5-2 8 2 12 0M2 9c5-2 8 2 12 0" stroke="#fff" fill="none" strokeWidth="1.500" /></> },
  { name: "TO", art: <><path d="M1 4h6M4 4v6" stroke="#d8452a" strokeWidth="2" /><circle cx="8" cy="9" r="3" stroke="#d8452a" strokeWidth="1.500" fill="none" /><circle cx="13" cy="8" r="2.500" stroke="#ddd" fill="none" strokeWidth="1.500" /></> },
  { name: "Photoshop", art: <><path d="M1 1h14v14H1z" fill="#0b2533" stroke="#30a8df" /><text x="3" y="11" fontSize="8" fill="#42b8ee">Ps</text></> },
  { name: "Spotify", art: <><Circle c="#2ebd59" /><path d="M4 6c3-1 6-1 8 1M4 8.500c3-1 5-1 7 1M5 11c2-1 4-1 5 0" stroke="#123" fill="none" strokeWidth="1.300" /></> },
  { name: "Logitech", art: <path d="M8 2a6 6 0 0 0 0 12M9 8h5v6" stroke="#2aa7df" strokeWidth="3" fill="none" /> },
  { name: "Target", art: <><circle cx="8" cy="8" r="5" fill="#fff" /><path d="M8 1v14M1 8h14" stroke="#c0504d" /><circle cx="8" cy="8" r="2" fill="#a33" /></> },
  { name: "A editor", art: <><path d="M1 1h14v14H1z" fill="#3b5a3c" stroke="#cdd6cb" /><path d="m4 13 4-10 4 10M5 10h6" stroke="#fff" fill="none" strokeWidth="1.600" /></> },
  { name: "Server", art: <><path d="M5 1h8v13H5z" fill="#8a8a8a" /><path d="M6 4h6M6 7h6" stroke="#ddd" /><circle cx="4" cy="12" r="2.500" fill="#aaa" /><circle cx="9" cy="13" r="1.500" fill="#c33" /></> },
  { name: "Night", art: <><path d="M1 1h14v14H1z" fill="#0b1230" /><path d="m4 4 3 3 4-4M5 12l3-4 4 5" stroke="#1c2a55" fill="none" /></> },
  { name: "Fox", art: <><path d="m4 2 4 4 4-4v6l-4 3-4-3z" fill="#b5482c" /><path d="M5 9h6l-3 6z" fill="#e0b48c" /></> },
  { name: "OneNote", art: <><path d="M0 2 10 0v16L0 14z" fill="#80397b" /><path d="M10 3h5v10h-5z" fill="#c9a4c6" /><path d="M3 11V5l4 6V5" stroke="#fff" fill="none" strokeWidth="1.400" /></> },
  { name: "Compass", art: <><Circle c="#eee" /><circle cx="8" cy="8" r="4.500" stroke="#444" fill="none" strokeWidth="1.500" /><path d="m6 10 4-4v4z" fill="#333" /></> },
  { name: "Pushbullet", art: <><Circle c="#4ab367" /><path d="M5 5v6" stroke="#fff" strokeWidth="2" /><path d="M8 5h2c3 0 3 6 0 6H8z" fill="#fff" /></> },
  { name: "Globe check", art: <><Circle c="#2c8bbd" /><path d="m3 6 4 7 8-9" stroke="#8cd04a" strokeWidth="3" fill="none" /></> },
  { name: "OBS", open: true, art: <><circle cx="8" cy="8" r="7" fill="#1b1b1b" stroke="#ccc" strokeWidth="1.200" /><path d="M8 2c-3 3 0 5 0 6s5 0 5 4M8 8c-2 0-5 2-5 4" stroke="#ccc" fill="none" strokeWidth="1.500" /></> },
  { name: "Sticky notes", open: true, art: <><path d="M0 1h16v14H0z" fill="#fbe100" /><path d="M9 15V9h7z" fill="#222" /></> },
  { name: "Voicemeeter", open: true, art: <><path d="M0 1h16v7H0z" fill="#df4b42" /><path d="M0 9h16v6H0z" fill="#333b45" /><text x="0" y="7" fontSize="5" fill="#fff">VOICE</text><text x="0" y="14" fontSize="4" fill="#fff">MEETER</text></> },
  { name: "Installer", open: true, art: <><path d="M5 1h10v9H5z" fill="#5aa3d4" /><path d="M2 5h7v10H2z" fill="#c9d0d4" /><path d="m4 13 9-10" stroke="#e6e6e6" strokeWidth="2" /></> },
  { name: "Document", open: true, art: <path d="M3 1h7l3 3v11H3z" fill="#fff" /> },
];

const tray: { name: string; art: ReactNode }[] = [
  { name: "Skype", art: <><Circle c="#1ba6e6" /><path d="M10.500 5c-4-2-6 1-2.500 3s1 4-3 2.500" stroke="#fff" fill="none" strokeWidth="1.500" /></> },
  { name: "OBS", art: <><circle cx="8" cy="8" r="7" fill="#222" stroke="#bbb" /><path d="M8 3c-2 2 0 4 0 5l4 3" stroke="#ccc" fill="none" /><circle cx="4" cy="11" r="3" fill="#d33" /></> },
  { name: "Chrome", art: <><Circle c="#e34133" /><path d="M1.500 5 8 8v7A7 7 0 0 1 1.500 5z" fill="#32a350" /><path d="M8 8l6.500-3A7 7 0 0 1 8 15z" fill="#fbc116" /><circle cx="8" cy="8" r="3" fill="#4a87ee" stroke="#fff" /></> },
  { name: "Cloud", art: <><path d="M4 13a3 3 0 0 1 0-6 4 4 0 0 1 8 0 3 3 0 0 1 0 6z" fill="#fff" /><path d="M8 12V8M6 10l2-2 2 2" stroke="#222" fill="none" /></> },
  { name: "Plug", art: <path d="M2 5h12l-3 5H9v4H7v-4H5z" fill="#6a9a3a" /> },
  { name: "Acrobat", art: <><path d="M1 1h14v14H1z" fill="#401010" stroke="#c9302c" /><path d="M4 12c3-3 4-6 4-9 0 4 3 7 5 7-4 0-6 0-9 2z" stroke="#e55" fill="none" /></> },
  { name: "NVIDIA", art: <><path d="M1 3h14v10H1z" fill="#5c8f12" /><path d="M4 8c2-4 7-4 9 0-2 4-7 4-9 0z" fill="#cfe3a7" /><circle cx="8" cy="8" r="1.500" fill="#333" /></> },
  { name: "Voicemeeter", art: <><path d="M0 1h16v7H0z" fill="#df4b42" /><path d="M0 9h16v6H0z" fill="#6a737d" /><path d="M2 4.500h12M2 12h12" stroke="#fff" strokeDasharray="2 1" strokeWidth="2" /></> },
  { name: "Security", art: <><path d="m8 1 6 2v5c0 4-3 6-6 7-3-1-6-3-6-7V3z" fill="#eee" /><path d="M9 8h7l-2 7H8z" fill="#f0b52c" /></> },
  { name: "Keyboard", art: <path d="M2 6h12M2 9h12M2 12h12" stroke="#777" strokeDasharray="3 1" strokeWidth="2" /> },
  { name: "Logitech", art: <path d="M8 2a6 6 0 0 0 0 12M9 8h5v6" stroke="#2aa7df" strokeWidth="2.500" fill="none" /> },
  { name: "Volume", art: <path d="M1 6h3l4-3v10l-4-3H1zM10 6c1 1 1 3 0 4M12 4c2 2 2 6 0 8" stroke="#ddd" fill="none" /> },
  { name: "USB", art: <path d="M5 6h6v9H5zM6 1h4v5H6z" stroke="#ccc" fill="none" strokeWidth="1.200" /> },
  { name: "OneDrive", art: <><path d="M3 12a3 3 0 0 1 1-5 4 4 0 0 1 7 0 3 3 0 0 1 2 5z" fill="#ddd" /><circle cx="12" cy="12" r="3" fill="#8a9dd0" /></> },
  { name: "Network", art: <path d="M3 3h12v7H3zM7 13h5M1 5v6h3" stroke="#ddd" fill="none" strokeWidth="1.200" /> },
  { name: "Bluetooth", art: <><ellipse cx="8" cy="8" rx="5" ry="7" fill="#2a72d4" /><path d="m5 5 6 6-3 2V3l3 2-6 6" stroke="#fff" fill="none" /></> },
  { name: "Drive ok", art: <><path d="M1 4h13v8H1z" fill="#b5c4c4" /><path d="m6 9 3 4 6-7" stroke="#49a942" fill="none" strokeWidth="2.500" /></> },
  { name: "TeamViewer", art: <><path d="M0 1h16v12H0z" fill="#3c97e0" /><path d="M3 7h10M5 5 3 7l2 2M11 5l2 2-2 2" stroke="#fff" strokeWidth="1.500" fill="none" /><path d="M9 11h7v4H9z" fill="#6c4" /></> },
];

const Taskbar = () => (
  <footer className="flex h-[23px] shrink-0 items-stretch bg-[#0b0b0a] text-white">
    <button aria-label="Start" className="flex w-7 items-center justify-center">
      <svg viewBox="0 0 16 16" className="h-[9px] w-[9px]"><path d="m0 2 7-1v7H0zM8 1l8-1v8H8zM0 9h7v6l-7-1zM8 9h8v7l-8-1z" fill="#fff" /></svg>
    </button>
    <label className="flex w-[201px] items-center bg-[#f2f2f2] pl-[5px] pr-2">
      <svg viewBox="0 0 16 16" className="h-[15px] w-[15px]"><circle cx="8" cy="8" r="6.500" fill="none" stroke="#111" strokeWidth="1.600" /></svg>
      <input aria-label="Search" placeholder="Type here to search" className="min-w-0 flex-1 bg-transparent pl-[5px] text-[8px] placeholder:text-[#444]" />
      <svg viewBox="0 0 10 14" className="h-[11px] w-[8px]"><path d="M3.500 1h3v7h-3zM1 6v4h8V6M5 10v3" stroke="#444" fill="none" /></svg>
    </label>
    <div className="ml-[2px] flex w-[697px]">
      {apps.map((app) => (
        <button
          key={app.name}
          aria-label={app.name}
          className={`flex flex-1 flex-col items-center justify-between ${app.name === "Document" ? "bg-[#3c3c3c]" : ""}`}
        >
          <svg viewBox="0 0 16 16" className="mt-[5px] h-[13px] w-[14px]">{app.art}</svg>
          <span className={`h-[2px] w-[19px] ${app.open ? "bg-[#76b9ed]" : ""}`} />
        </button>
      ))}
    </div>
    <button aria-label="People" className="ml-auto flex w-6 items-center justify-center">
      <svg viewBox="0 0 16 16" className="h-[10px] w-[10px]" fill="none" stroke="#ddd" strokeWidth="1.300"><circle cx="10" cy="4" r="3" /><circle cx="5" cy="8" r="2" /><path d="M1 15c1-5 7-5 8 0M8 9c4-3 7 0 7 5" /></svg>
    </button>
    <div className="ml-1 flex w-[253px] items-center">
      {tray.map((t) => (
        <button key={t.name} aria-label={t.name} className="flex flex-1 justify-center">
          <svg viewBox="0 0 16 16" className="h-[10px] w-[10px]">{t.art}</svg>
        </button>
      ))}
    </div>
    <div className="ml-1 flex w-8 flex-col justify-center text-center font-['Roboto',sans-serif] text-[7px] leading-[11px]">
      <span>2:27 PM</span>
      <span>1/25/2019</span>
    </div>
    <button aria-label="Notifications" className="flex w-8 items-center justify-center">
      <svg viewBox="0 0 16 16" className="h-[10px] w-[10px]"><path d="M1 2h14v10h-4v3l-3-3H1z" stroke="#ddd" fill="none" strokeWidth="1.300" /></svg>
    </button>
    <div className="ml-[2px] border-r border-[#555]" />
  </footer>
);

const menus = ["File", "Edit", "Build", "Terrain", "Library", "3D", "CAD", "Tools", "View", "Window", "Help"];

export default function App() {
  return (
    <div className="flex h-screen flex-col overflow-hidden bg-[#f0f0f0] font-['Open_Sans',sans-serif] text-[6px] leading-none text-[#222]">
      <header className="bg-white font-['Roboto',sans-serif] text-[7px]">
        <div className="flex h-[13px] items-center">
          <svg viewBox="0 0 10 10" className="mr-px h-[10px] w-[10px]"><path d="M1 9V1c4 0 7 4 8 8" stroke="#333" fill="none" /></svg>
          <span>Chief Architect Premier X10</span>
          <div className="ml-auto flex items-center gap-[21px] pr-3">
            <button aria-label="Minimize"><svg viewBox="0 0 6 6" className="h-[6px] w-[6px]"><path d="M0 3h6" stroke="#333" strokeWidth=".8" /></svg></button>
            <button aria-label="Restore"><svg viewBox="0 0 6 6" className="h-[6px] w-[6px]"><path d="M1 2h3v3H1zM2 2V1h3v3H4" stroke="#333" fill="none" strokeWidth=".8" /></svg></button>
            <button aria-label="Close"><svg viewBox="0 0 6 6" className="h-[6px] w-[6px]"><path d="m0 0 6 6M6 0 0 6" stroke="#333" strokeWidth=".8" /></svg></button>
          </div>
        </div>
        <nav className="flex h-[13px] items-center gap-[5px] pb-px pl-[3px]">
          {menus.map((m) => (
            <button key={m}>{m}</button>
          ))}
        </nav>
      </header>

      <div className="flex h-[15px] items-center pl-px">
        <Handle />
        <Tools className="w-[293px]" items="star doc folder save saveas gsave gsave pdf gmail picture printer gcube chart screen eraser mail swirl undo redo" />
        <div className="ml-2 mr-[5px] h-[15px] w-px bg-[#ddd]" />
        <Tools className="w-[47px]" items="checks checkframe blank" />
        <div className="ml-px flex h-[13px] w-[132px] items-center bg-[#dcdcdc] pl-[2px] text-[7px]">
          <svg viewBox="0 0 16 16" className="h-[10px] w-[10px]"><path d="M1 3h7v6H1zM4 6h7v6H4z" stroke={B} fill="#fff" /><path d="M9 8v6h6" stroke={R} fill="none" /></svg>
          <Select label="Layer set" value="Camera View Layer Set" className="flex-1" />
        </div>
        <div className="flex h-[13px] w-[93px] items-center bg-[#dcdcdc] pl-[2px] text-[7px]">
          <svg viewBox="0 0 16 16" className="h-[10px] w-[10px]"><path d="M1 3h7v6H1zM4 6h7v6H4z" stroke={B} fill="#fff" /><path d="m8 14 3-8 3 8M9 11h4" stroke={R} fill="none" /></svg>
          <Select label="Annotation set" value={'1/4" Scale Annotations'} className="flex-1" />
        </div>
        <div className="flex h-[13px] w-[118px] items-center bg-[#c9c9c9] pl-[2px]">
          <svg viewBox="0 0 16 16" className="h-[10px] w-[10px]"><path d="M1 3h7v6H1zM4 6h9v7H4z" stroke="#eee" fill="#ddd" /></svg>
          <Select label="Dimension set" value=" " className="flex-1" />
        </div>
        <Tools className="w-[46px]" items="wrenchc wrench cabtool" />
      </div>

      <div className="flex h-4 items-center border-t border-[#dedede] pl-px">
        <Handle />
        <Tools
          className="w-[554px]"
          items="cursor brick hatch shape door rail dashsq barrel v fence zigzag *curve wall wall2 wall3 winh win4 square win3 bwall v fire stairs v building v redhouse v ahouse house v bcube v gslab v ghouse v trap v cyl pslab v"
        />
        <div className="mr-[3px] h-[15px] w-px bg-[#ddd]" />
        <Tools className="w-[47px]" items="down two up" />
        <div className="mx-[2px] h-[15px] w-px bg-[#ddd]" />
        <Tools
          className="w-[565px]"
          items="dimh dots line bar cl tape diaga boxa dim1 dim2 dim3 dim2 lead v text arc arrow cdia spline fn v arc v gbox v cloud fn vbar brk pts gcab circle textbox cloud cross v arrow circle v gpatch"
        />
      </div>

      <div className="flex h-[18px] items-center border-y border-[#dedede] pl-px">
        <Handle />
        <Tools
          className="w-[353px]"
          items="faucet key panel switch slab sun outlet bulbs gbulbs dollar dollarv dollar3 dial cond garc camera fridge duct unit trash clip bars bars"
        />
        <div className="ml-4 mr-[2px] h-[15px] w-px bg-[#ddd]" />
        <Tools className="w-[122px]" items="gpole gpoles toilet tub sink mirror disc bars" />
        <div className="ml-6 mr-[5px] h-[15px] w-px bg-[#ddd]" />
        <Tools
          className="w-[298px]"
          items="cab v cab2 cab3 cab4 ddoor redcab redstove redchair box fridge2 rings rings faucet2 window2 stool bcab corner shelves stripes"
        />
        <div className="ml-4 mr-1 h-[15px] w-px bg-[#ddd]" />
        <Tools className="w-[151px]" items="mat1 mat2 mat3 mat4 mat5 bars bars bars bars bars" />
      </div>

      <div className="flex min-h-0 flex-1">
        <div className="w-[17px] shrink-0 border-r border-[#bbb] pt-[5px]">
          <Strip items="pbar bars dcheck redcheck help" />
        </div>

        <section className="flex min-w-0 flex-1 flex-col">
          <div className="flex h-3 shrink-0 items-center justify-between px-px pr-[3px] text-[#999]">
            <span className="whitespace-pre">easy porch with columns:  Working Plan View</span>
            <Cross />
          </div>
          <div className="flex min-h-0 flex-1">
            <PlanView />
            <VScroll />
          </div>
          <HScroll before="flex-[3]" after="flex-[4]" />
        </section>

        <div className="w-[3px] shrink-0 border-x border-[#bbb] bg-[#eee]" />

        <section className="flex min-w-0 flex-1 flex-col">
          <div className="flex h-3 shrink-0 items-center justify-between bg-[#cfcfcf] px-px">
            <span>easy porch with columns: Perspective Floor Overview - Camera 1</span>
            <Cross />
          </div>
          <div className="flex min-h-0 flex-1">
            <CameraView />
            <VScroll />
          </div>
          <HScroll before="flex-1" after="flex-1" />
        </section>

        <aside className="flex w-[244px] shrink-0 flex-col border-l border-[#bbb] pl-[3px]">
          <div className="flex h-3 shrink-0 items-center">
            <button className="flex h-full items-center gap-[3px] bg-white px-[6px]">Active Layer Display Options <Cross /></button>
            <button className="flex h-full items-center gap-[3px] border-r border-[#ddd] pl-[9px] pr-2">Project Browser <Cross /></button>
          </div>
          <PanelTitle>Active Layer Display Options</PanelTitle>
          <LayerOptions />
          <LibraryBrowser />
        </aside>

        <div className="flex w-[91px] shrink-0 border-l border-[#ddd] pt-1">
          <div className="w-[17px] border-r border-[#ddd]">
            <Strip items="#dcdac8 #efece4 #d9d9dc #eee5da #282c28 bars" />
            <div className="mb-[6px] mt-[93px] h-px bg-[#ddd]" />
            <Strip items="spray dropper dropno lines glassno ldrop layers hspray cards cards2 cards3 cards4 cards rdoor" />
          </div>
          <div className="w-[17px] border-r border-[#ddd]">
            <Strip items="_ _ _ #f0eede #ebe9da #e0e1da #dcddd8 #dcddda #b7b3aa #f5f3bb #f1e8d8 #e9cc98 #cfc1a4 #978b7b #a8a79b #b1dcb6 #6e8470 #2d3b6e #fb6c72 #2d3029 #141821 #000000 noise rune #9b9c9b" />
            <div className="h-[6px]" />
            <Strip items="hlines #f2ebdf bricks #22282e #9b9b90" />
          </div>
          <div className="w-[17px] border-r border-[#ddd]">
            <Strip items="_ brickl brickl hex diamond #dcdcdc zig #84857f #23252d #151515 #d2b593 #c4ad7f #5d6062 #efebe5" />
            <div className="mb-[6px] mt-[19px] h-px bg-[#ddd]" />
            <Strip items="#f0cda7 #cf9a63 #e8cfae _ #e1bf7d chevs" />
            <div className="h-[3px]" />
            <Strip items="#c19359 #c19e6c #312a24 #93442d bars" />
            <div className="mb-[19px] mt-[43px] h-px bg-[#ddd]" />
            <Strip items="#9a9c96 #cfcfcf #e5eac5 #d0ccc6 #9c9c55 #f5db80 #efc09a #22222a" />
          </div>
          <div className="w-[16px] border-r border-[#ddd]">
            <Strip items="arc1 arc2 arc2 *arcc arc2" />
            <div className="h-[7px]" />
            <Strip items="offs offs *offc offs2" />
            <div className="h-[6px]" />
            <Strip items="*snap glayers gpage gpage2 *tcheck *xcheck gsnap ggrid *grid *snapbox *angle" />
          </div>
          <div className="flex-1">
            <Strip items="gcam hblue hyel hred hblue+ *hcheck+ *hcheck hor hblack hline *hhalf hhalf2 *globe bulb+ hpage net+ savecam bprint" />
            <div className="mb-[4px] mt-[12px] h-px bg-[#ddd]" />
            <Strip items="zoomr zoomin zoomout zoomf fit fill hand glayers gundo refresh" />
          </div>
        </div>
      </div>

      <div className="flex h-4 items-center pl-px">
        <Handle />
        <Tools className="w-[62px]" items="*roofred terrain plan elev" />
        <button className="w-4 pl-px text-left leading-[6px]"><span className="text-[7px]">EXT</span> Tools</button>
      </div>
      <div className="flex h-3 items-center pr-[29px] font-['Roboto',sans-serif] text-[7px]">
        <span className="w-[594px] whitespace-pre pl-[440px]">Done:  1491 surfaces</span>
        <span className="w-[244px]">All Floors</span>
        <span>Drawing Group: -</span>
        <span className="ml-auto w-[198px]">X: 636 9/16", Y: 249 3/16", Z: 1"</span>
        <span>1362 x 1714</span>
      </div>
      <Taskbar />
    </div>
  );
}
